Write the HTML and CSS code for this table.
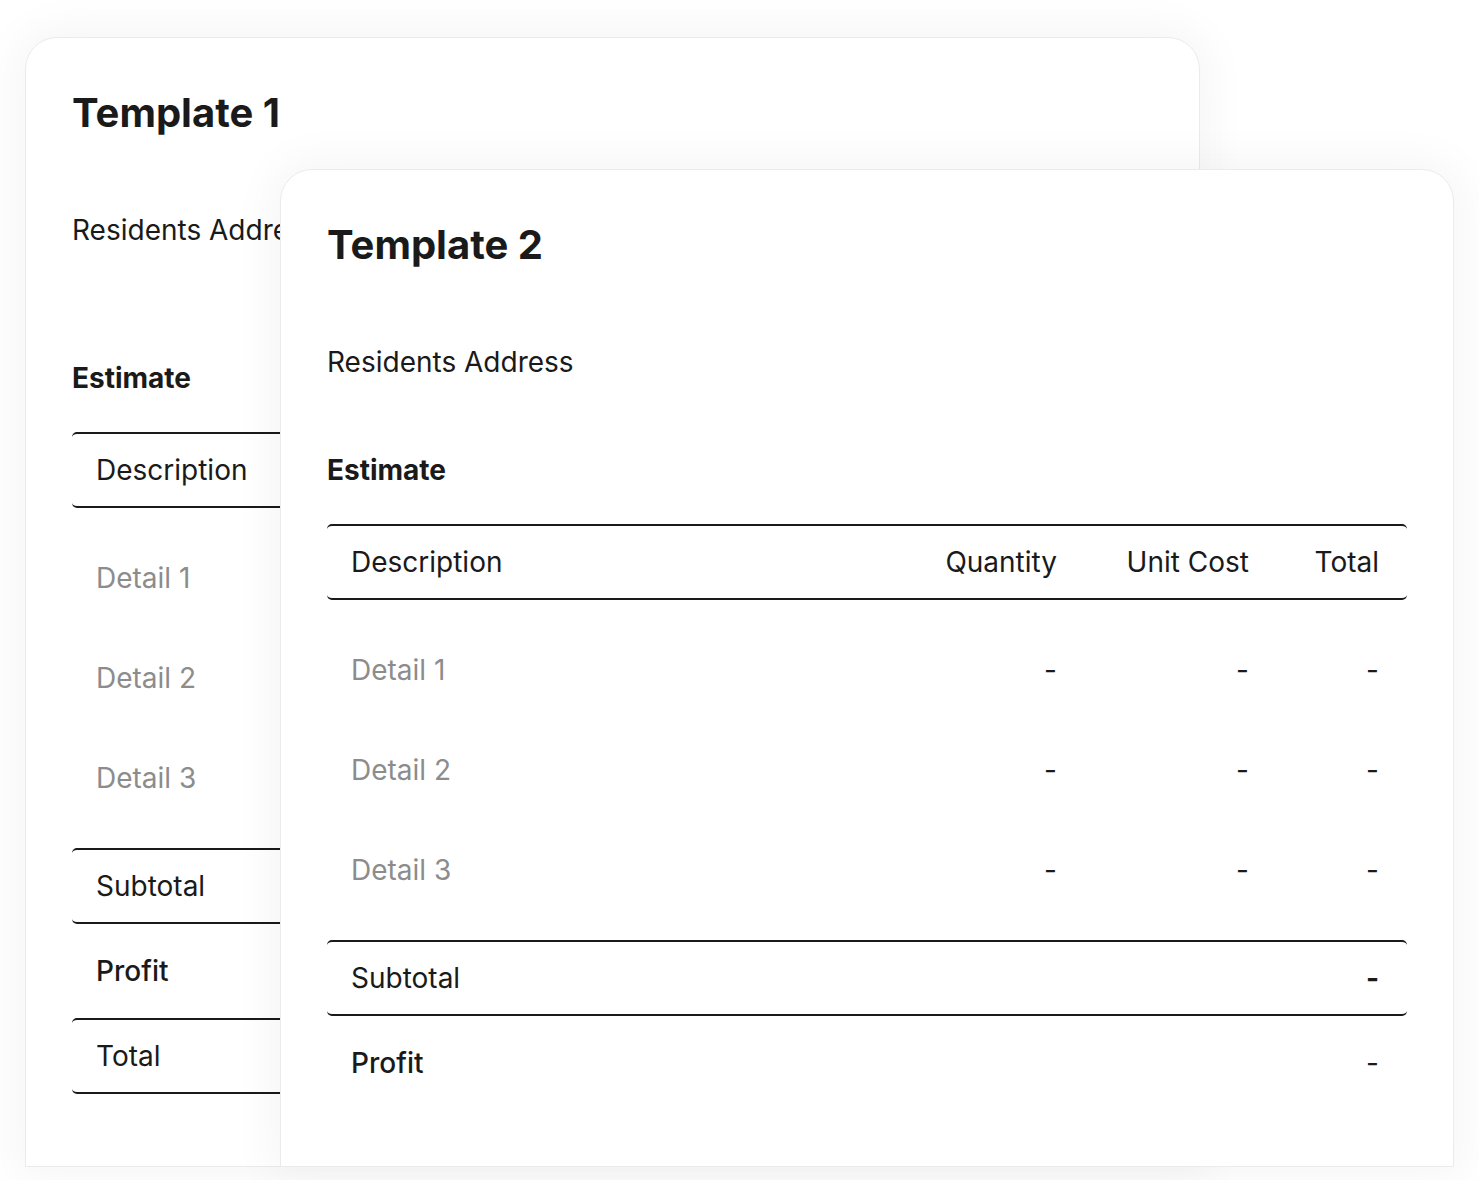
FILE: index.html
```html
<!DOCTYPE html>
<html lang="en">
<head>
<meta charset="utf-8">
<title>Templates</title>
<link rel="stylesheet" href="styles.css">
</head>
<body>
<div class="stage">
  <section class="card card-one">
    <h1 class="title">Template 1</h1>
    <p class="address">Residents Address</p>
    <h2 class="estimate estimate-one">Estimate</h2>
    <div class="table">
      <div class="row head">
        <span>Description</span><span class="num">Quantity</span><span class="num">Unit Cost</span><span class="num">Total</span>
      </div>
      <div class="body">
        <div class="row item"><span>Detail 1</span><span class="num">-</span><span class="num">-</span><span class="num">-</span></div>
        <div class="row item"><span>Detail 2</span><span class="num">-</span><span class="num">-</span><span class="num">-</span></div>
        <div class="row item"><span>Detail 3</span><span class="num">-</span><span class="num">-</span><span class="num">-</span></div>
      </div>
      <div class="row boxed"><span>Subtotal</span><span></span><span></span><span class="num strong">-</span></div>
      <div class="row profit"><span class="medium">Profit</span><span></span><span></span><span class="num">-</span></div>
      <div class="row boxed"><span>Total</span><span></span><span></span><span class="num strong">-</span></div>
    </div>
  </section>
  <section class="card card-two">
    <h1 class="title">Template 2</h1>
    <p class="address">Residents Address</p>
    <h2 class="estimate">Estimate</h2>
    <div class="table">
      <div class="row head">
        <span>Description</span><span class="num">Quantity</span><span class="num">Unit Cost</span><span class="num">Total</span>
      </div>
      <div class="body">
        <div class="row item"><span>Detail 1</span><span class="num">-</span><span class="num">-</span><span class="num">-</span></div>
        <div class="row item"><span>Detail 2</span><span class="num">-</span><span class="num">-</span><span class="num">-</span></div>
        <div class="row item"><span>Detail 3</span><span class="num">-</span><span class="num">-</span><span class="num">-</span></div>
      </div>
      <div class="row boxed"><span>Subtotal</span><span></span><span></span><span class="num strong">-</span></div>
      <div class="row profit"><span class="medium">Profit</span><span></span><span></span><span class="num">-</span></div>
    </div>
  </section>
</div>
</body>
</html>
```

FILE: styles.css
```css
* { box-sizing: border-box; }
html, body { margin: 0; padding: 0; background: #ffffff; }
body {
  font-family: Inter, "Noto Sans", "Liberation Sans", sans-serif;
  color: #1a1a1a;
  height: 1180px;
  overflow: hidden;
}
.stage {
  display: grid;
  padding: 37px 0 0 25px;
}
.card {
  grid-area: 1 / 1;
  background: #ffffff;
  border: 1px solid #ebebeb;
  border-radius: 32px 32px 0 0;
  box-shadow: 0 0 44px 10px rgba(0, 0, 0, 0.04);
  padding: 51px 46px 0 46px;
  overflow: hidden;
}
.card-one { width: 1175px; height: 1130px; }
.card-two { width: 1174px; height: 998px; margin: 132px 0 0 255px; }
.title {
  margin: 0;
  font-size: 40px;
  line-height: 48px;
  font-weight: 700;
}
.address {
  margin: 77px 0 0;
  font-size: 28px;
  line-height: 32px;
  font-weight: 400;
}
.estimate {
  margin: 76px 0 0;
  font-size: 28px;
  line-height: 32px;
  font-weight: 700;
}
.estimate-one { margin-top: 116px; }
.table { margin-top: 38px; font-size: 28px; }
.row {
  display: grid;
  grid-template-columns: 1fr 150px 192px 130px;
  align-items: center;
  padding: 0 28px 0 24px;
  line-height: 32px;
}
.num { text-align: right; }
.head, .boxed {
  height: 76px;
  border-top: 2px solid #1a1a1a;
  border-bottom: 2px solid #1a1a1a;
  border-radius: 5px;
}
.body { padding: 20px 0; }
.item { height: 100px; color: #8c8c8c; }
.item .num { color: #1a1a1a; }
.profit { height: 94px; }
.medium { font-weight: 500; }
.strong { font-weight: 700; }
```
